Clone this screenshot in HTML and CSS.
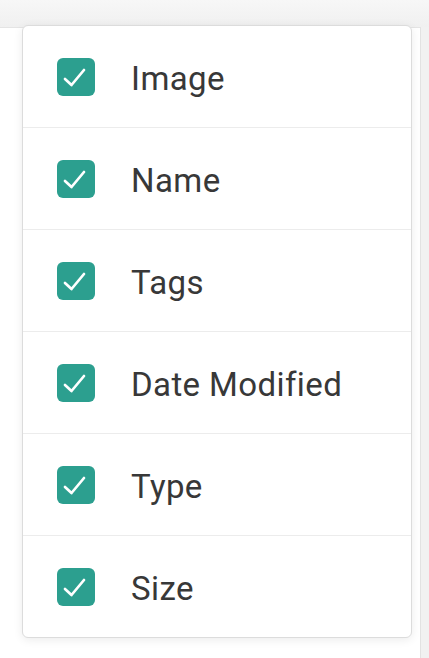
FILE: index.html
```html
<!DOCTYPE html>
<html>
<head>
<meta charset="utf-8">
<link rel="stylesheet" href="styles.css">
</head>
<body>
<div class="page">
  <div class="topbar"></div>
  <div class="panel"></div>
</div>
<div class="menu">
  <label class="item"><span class="box"><svg viewBox="0 0 38 38" width="38" height="38"><path d="M8 21 L14.5 27 L27 12" fill="none" stroke="#fff" stroke-width="2.7" stroke-linecap="round" stroke-linejoin="round"/></svg></span><span class="label">Image</span></label>
  <label class="item"><span class="box"><svg viewBox="0 0 38 38" width="38" height="38"><path d="M8 21 L14.5 27 L27 12" fill="none" stroke="#fff" stroke-width="2.7" stroke-linecap="round" stroke-linejoin="round"/></svg></span><span class="label">Name</span></label>
  <label class="item"><span class="box"><svg viewBox="0 0 38 38" width="38" height="38"><path d="M8 21 L14.5 27 L27 12" fill="none" stroke="#fff" stroke-width="2.7" stroke-linecap="round" stroke-linejoin="round"/></svg></span><span class="label">Tags</span></label>
  <label class="item"><span class="box"><svg viewBox="0 0 38 38" width="38" height="38"><path d="M8 21 L14.5 27 L27 12" fill="none" stroke="#fff" stroke-width="2.7" stroke-linecap="round" stroke-linejoin="round"/></svg></span><span class="label">Date Modified</span></label>
  <label class="item"><span class="box"><svg viewBox="0 0 38 38" width="38" height="38"><path d="M8 21 L14.5 27 L27 12" fill="none" stroke="#fff" stroke-width="2.7" stroke-linecap="round" stroke-linejoin="round"/></svg></span><span class="label">Type</span></label>
  <label class="item"><span class="box"><svg viewBox="0 0 38 38" width="38" height="38"><path d="M8 21 L14.5 27 L27 12" fill="none" stroke="#fff" stroke-width="2.7" stroke-linecap="round" stroke-linejoin="round"/></svg></span><span class="label">Size</span></label>
</div>
</body>
</html>
```
FILE: styles.css
```css
html, body {
  margin: 0;
  padding: 0;
  height: 100%;
}
body {
  background: #f1f1f1;
  font-family: Roboto, "Liberation Sans", sans-serif;
  position: relative;
  overflow: hidden;
}
.page {
  display: flex;
  flex-direction: column;
  height: 100%;
}
.topbar {
  height: 27px;
  background: linear-gradient(#f7f7f7, #f0f0f0);
  flex: none;
}
.panel {
  flex: 1;
  width: 420px;
  background: #fff;
  border-top: 1px solid #e4e4e4;
  border-right: 1px solid #e2e2e2;
}
.menu {
  position: absolute;
  left: 22px;
  top: 25px;
  width: 388px;
  background: #fff;
  border: 1px solid #dcdcdc;
  border-radius: 6px;
  box-shadow: 0 2px 10px rgba(0, 0, 0, 0.08);
  display: flex;
  flex-direction: column;
  overflow: hidden;
}
.item {
  display: flex;
  align-items: center;
  height: 101px;
  padding-left: 34px;
  gap: 36px;
  border-top: 1px solid #ececec;
}
.item:first-child {
  border-top: none;
}
.box {
  width: 38px;
  height: 38px;
  border-radius: 6px;
  background: #2c9f8f;
  display: flex;
  flex: none;
}
.label {
  font-size: 33px;
  color: #383838;
  letter-spacing: 0.4px;
  padding-top: 4px;
}
```
